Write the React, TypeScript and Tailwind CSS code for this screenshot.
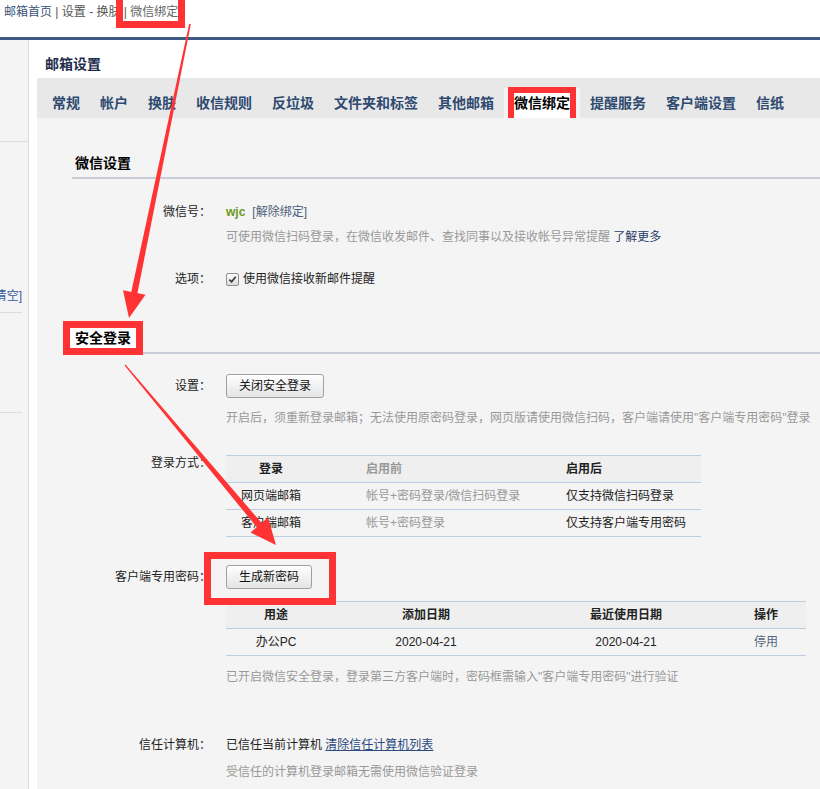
import React from "react";

const RED = "border-[#f33]";

export default function App() {
  return (
    <div className="relative h-[789px] w-[820px] overflow-hidden bg-white font-['Liberation_Sans','Noto_Sans_CJK_SC',sans-serif] text-[12px] text-[#222]">
      {/* breadcrumb */}
      <div className="relative h-[40px] border-b-[3px] border-[#3c5a82]">
        <div className="whitespace-pre pl-[4px] pt-[2px] leading-[20px] text-[#555]">
          <span className="text-[#3a5378]">邮箱首页</span>
          {" | 设置 - 换肤 | "}
          <span className="text-[#666]">微信绑定</span>
        </div>
        <div className={`absolute left-[116px] top-[-7px] h-[35px] w-[69px] border-[7px] ${RED}`} />
      </div>

      <div className="flex h-[749px]">
        <Sidebar />
        <div className="ml-[8px] flex min-w-0 flex-1 flex-col">
          <div className="h-[38px] pl-[8px] pt-[14px] text-[14px] font-bold leading-[20px] text-[#1e2d4a]">
            邮箱设置
          </div>
          <Tabs />
          <div className="flex-1 bg-[#f4f4f4] pl-[35px] pt-[35px]">
            <Heading>微信设置</Heading>

            <Row className="mt-[23px]" label="微信号：">
              <span className="font-bold text-[#6a9a23]">wjc</span>
              <span className="ml-[7px] text-[#4e5f7a]">[解除绑定]</span>
            </Row>
            <Desc className="mt-[5px]">
              可使用微信扫码登录，在微信收发邮件、查找同事以及接收帐号异常提醒{" "}
              <span className="text-[#2a3d6a]">了解更多</span>
            </Desc>

            <Row className="mt-[22px]" label="选项：">
              <span className="flex items-center">
                <CheckBox />
                <span className="ml-[4px]">使用微信接收新邮件提醒</span>
              </span>
            </Row>

            <Heading className="mt-[39px]" boxed>
              安全登录
            </Heading>

            <Row className="mt-[20px] h-[24px] items-center" label="设置：">
              <Button>关闭安全登录</Button>
            </Row>
            <Desc className="mt-[10px]">
              开启后，须重新登录邮箱；无法使用原密码登录，网页版请使用微信扫码，客户端请使用"客户端专用密码"登录
            </Desc>

            <Row className="mt-[25px]" label="登录方式：">
              <LoginTable />
            </Row>

            <Row className="mt-[28px] h-[24px] items-center" label="客户端专用密码：">
              <span className="relative">
                <Button>生成新密码</Button>
                <span className={`absolute left-[-22px] top-[-18px] h-[53px] w-[132px] border-[7px] ${RED}`} />
              </span>
            </Row>
            <div className="ml-[154px] mt-[12px]">
              <PwdTable />
            </div>
            <Desc className="mt-[11px]">
              已开启微信安全登录，登录第三方客户端时，密码框需输入"客户端专用密码"进行验证
            </Desc>

            <Row className="mt-[48px]" label="信任计算机：">
              已信任当前计算机{" "}
              <span className="text-[#2c4a80] underline">清除信任计算机列表</span>
            </Row>
            <Desc className="mt-[7px]">受信任的计算机登录邮箱无需使用微信验证登录</Desc>
          </div>
        </div>
      </div>

      <Arrows />
    </div>
  );
}

function Sidebar() {
  return (
    <div className="w-[29px] shrink-0 border-r border-[#ddd] bg-[#f4f4f4]">
      <div className="h-[102px] border-b border-[#ddd]" />
      <div className="mr-[6px] flex h-[171px] items-end justify-end overflow-hidden whitespace-nowrap border-b border-[#ddd] pb-[6px] leading-[20px] text-[#3a5b9e]">
        [清空]
      </div>
      <div className="mr-[6px] h-[100px] border-b border-[#ddd]" />
    </div>
  );
}

const tabs = ["常规", "帐户", "换肤", "收信规则", "反垃圾", "文件夹和标签", "其他邮箱", "微信绑定", "提醒服务", "客户端设置", "信纸"];

function Tabs() {
  return (
    <div className="flex h-[40px] items-end whitespace-nowrap bg-[#e8e8e8] pl-[5px] text-[14px] font-bold">
      {tabs.map((t) => {
        const active = t === "微信绑定";
        return (
          <div
            key={t}
            className={
              "h-[30px] px-[10px] pt-[5px] leading-[20px] " +
              (active ? "bg-[#f4f4f4] text-black" : "text-[#2e4a70]")
            }
          >
            {active ? (
              <span className="inline-block bg-white pb-[5px] outline-[6px] outline-solid outline-[#f33]">{t}</span>
            ) : (
              t
            )}
          </div>
        );
      })}
    </div>
  );
}

function Heading({ children, className, boxed }: { children: React.ReactNode; className?: string; boxed?: boolean }) {
  return (
    <div className={"border-b-2 border-[#c9cdd8] pb-[4px] text-[14px] font-bold leading-[20px] text-black " + (className ?? "")}>
      {boxed ? (
        <span className="ml-[-2px] inline-block bg-white px-[5px] outline-[7px] outline-solid outline-[#f33]">{children}</span>
      ) : (
        <span className="pl-[3px]">{children}</span>
      )}
    </div>
  );
}

function Row({ label, children, className }: { label: string; children: React.ReactNode; className?: string }) {
  return (
    <div className={"flex " + (className ?? "")}>
      <div className="w-[139px] shrink-0 text-right leading-[20px]">{label}</div>
      <div className="ml-[15px] leading-[20px]">{children}</div>
    </div>
  );
}

function Desc({ children, className }: { children: React.ReactNode; className?: string }) {
  return <div className={"whitespace-nowrap pl-[154px] leading-[20px] text-[#999] " + (className ?? "")}>{children}</div>;
}

function Button({ children }: { children: React.ReactNode }) {
  return (
    <button className="h-[24px] rounded-[3px] border border-[#a0a0a0] bg-gradient-to-b from-white to-[#e4e4e4] px-[12px] text-[12px] leading-[20px] text-[#111]">
      {children}
    </button>
  );
}

function CheckBox() {
  return (
    <span className="flex h-[13px] w-[13px] items-center justify-center rounded-[2px] border border-[#8f8f8f] bg-gradient-to-b from-[#fdfdfd] to-[#dcdcdc]">
      <svg viewBox="0 0 10 10" className="h-[9px] w-[9px]">
        <path d="M1.5 5.2 L4 7.6 L8.6 2" fill="none" stroke="#333" strokeWidth="1.8" />
      </svg>
    </span>
  );
}

function LoginTable() {
  const rows = [
    ["网页端邮箱", "帐号+密码登录/微信扫码登录", "仅支持微信扫码登录"],
    ["客户端邮箱", "帐号+密码登录", "仅支持客户端专用密码"],
  ];
  return (
    <div className="mt-[2px] w-[475px] border-t border-[#b9cde4]">
      <div className="grid h-[27px] grid-cols-[90px_250px_1fr] items-center border-b border-[#b9cde4] bg-[#efefef] font-bold">
        <span className="text-center">登录</span>
        <span className="pl-[50px] text-[#999]">启用前</span>
        <span>启用后</span>
      </div>
      {rows.map((r) => (
        <div key={r[0]} className="grid h-[27px] grid-cols-[90px_250px_1fr] items-center border-b border-[#b9cde4]">
          <span className="text-center">{r[0]}</span>
          <span className="pl-[50px] text-[#999]">{r[1]}</span>
          <span>{r[2]}</span>
        </div>
      ))}
    </div>
  );
}

function PwdTable() {
  return (
    <div className="w-[580px] border-t border-[#b9cde4] text-center">
      <div className="grid h-[27px] grid-cols-[100px_200px_200px_80px] items-center border-b border-[#b9cde4] bg-[#efefef] font-bold">
        <span>用途</span>
        <span>添加日期</span>
        <span>最近使用日期</span>
        <span>操作</span>
      </div>
      <div className="grid h-[27px] grid-cols-[100px_200px_200px_80px] items-center border-b border-[#b9cde4]">
        <span>办公PC</span>
        <span>2020-04-21</span>
        <span>2020-04-21</span>
        <span className="text-[#56667e]">停用</span>
      </div>
    </div>
  );
}

function Arrows() {
  return (
    <svg className="pointer-events-none absolute left-0 top-0" width="820" height="789" viewBox="0 0 820 789">
      <g fill="#f33">
        {/* arrow 1 */}
        <polygon points="190.8,24.2 189.2,23.8 130.4,296 136.6,297.2" />
        <polygon points="129,318 145.5,294.7 123,290.3" />
        {/* arrow 2 */}
        <polygon points="125.4,364.6 124.6,365.4 259.4,530.5 264.4,526.2" />
        <polygon points="276,545 250.5,532.5 268,517.5" />
      </g>
    </svg>
  );
}
